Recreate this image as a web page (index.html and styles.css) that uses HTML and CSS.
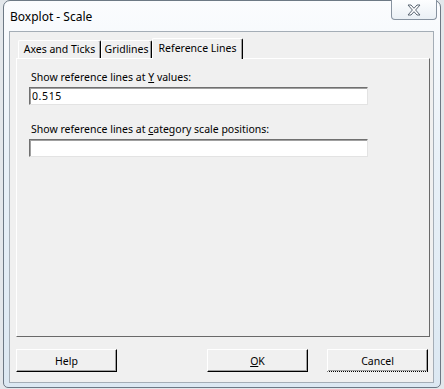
FILE: index.html
```html
<!DOCTYPE html>
<html lang="en">
<head>
    <meta charset="UTF-8">
    <title>Boxplot - Scale</title>
    <link rel="stylesheet" href="styles.css">
</head>
<body>
    <div class="window">
        <div class="titlebar">
            <span class="title">Boxplot - Scale</span>
            <button class="close">
                <svg width="14" height="12" viewBox="0 0 14 12">
                    <polygon points="1,1 4,1 7,4.3 10,1 13,1 8.6,6 13,11 10,11 7,7.7 4,11 1,11 5.4,6" fill="#fff" stroke="#5b6673" stroke-width="1" stroke-linejoin="round"/>
                </svg>
            </button>
        </div>

        <div class="client">
            <div class="tabs">
                <div class="tab tab-axes">Axes and Ticks</div>
                <div class="tab tab-grid">Gridlines</div>
                <div class="tab tab-ref active">Reference Lines</div>
            </div>

            <div class="panel">
                <label class="field-label">Show reference lines at <u>Y</u> values:</label>
                <input class="field" type="text" value="0.515">
                <label class="field-label second">Show reference lines at <u>c</u>ategory scale positions:</label>
                <input class="field" type="text" value="">
            </div>

            <div class="buttons">
                <button class="btn">Help</button>
                <div class="btn-group">
                    <button class="btn"><u>O</u>K</button>
                    <button class="btn focused">Cancel</button>
                </div>
            </div>
        </div>
    </div>
</body>
</html>
```

FILE: styles.css
```css
* {
    box-sizing: border-box;
}

body {
    margin: 0;
    width: 444px;
    height: 389px;
    overflow: hidden;
    background: #e3e7eb;
    font-family: "Noto Sans", "Open Sans", sans-serif;
    font-size: 10.5px;
    color: #000;
}

.window {
    margin-left: 3px;
    width: 438px;
    height: 388px;
    display: flex;
    flex-direction: column;
    border: 1px solid #6d7985;
    border-radius: 7px 7px 5px 5px;
    background: linear-gradient(#fbfcfe, #e9f1f8 40%, #dce8f2);
}

.titlebar {
    height: 30px;
    display: flex;
    justify-content: space-between;
    align-items: flex-start;
}

.title {
    padding: 7px 0 0 6px;
    font-size: 12px;
    color: #000;
}

.close {
    width: 46px;
    height: 20px;
    margin: -1px 3px 0 0;
    padding: 0;
    display: flex;
    align-items: center;
    justify-content: center;
    border: 1px solid #8793a0;
    border-top: none;
    border-radius: 0 0 4px 4px;
    background: linear-gradient(#fdfeff, #eaf0f5);
}

/* Client area */
.client {
    flex: 1;
    margin: 0 6px 4px 5px;
    display: flex;
    flex-direction: column;
    border: 1px solid #a4adb6;
    background: #f0f0f0;
}

.tabs {
    display: flex;
    height: 20px;
    margin: 6px 0 0 8px;
    align-items: flex-end;
}

.tab {
    height: 18px;
    line-height: 17px;
    text-align: center;
    background: #f0f0f0;
    border-top: 1px solid #fff;
    border-left: 1px solid #fff;
    border-right: 1px solid #000;
    border-radius: 2px 2px 0 0;
    box-shadow: inset -1px 0 #a0a0a0;
    white-space: nowrap;
}

.tab-axes { width: 83px; }
.tab-grid { width: 51px; }
.tab-ref { width: 91px; }

.tab.active {
    height: 21px;
    margin-bottom: -1px;
    line-height: 18px;
    position: relative;
    z-index: 1;
}

.panel {
    height: 279px;
    margin: 0 3px 0 6px;
    padding: 10px 0 0 12px;
    display: flex;
    flex-direction: column;
    align-items: flex-start;
    background: #f0f0f0;
    border-top: 1px solid #fff;
    border-left: 1px solid #fff;
    border-right: 1px solid #696969;
    border-bottom: 1px solid #696969;
}

.field-label {
    padding-left: 2px;
    line-height: 16px;
}

.field-label.second {
    margin-top: 16px;
}

.field {
    width: 339px;
    height: 18px;
    margin-top: 2px;
    padding: 0 2px;
    font-family: "Noto Sans", "Open Sans", sans-serif;
    font-size: 10.5px;
    letter-spacing: 0.6px;
    background: #fff;
    border-top: 1px solid #707070;
    border-left: 1px solid #707070;
    border-right: 1px solid #e3e3e3;
    border-bottom: 1px solid #e3e3e3;
    box-shadow: inset 1px 1px #a0a0a0;
    outline: none;
}

.buttons {
    display: flex;
    justify-content: space-between;
    margin: 12px 5px 0 6px;
}

.btn-group {
    display: flex;
    gap: 19px;
}

.btn {
    width: 101px;
    height: 23px;
    padding: 0;
    font-family: "Noto Sans", "Open Sans", sans-serif;
    font-size: 10.5px;
    color: #000;
    background: #f0f0f0;
    border-top: 1px solid #fff;
    border-left: 1px solid #fff;
    border-right: 1px solid #000;
    border-bottom: 1px solid #000;
    box-shadow: inset -1px -1px #a0a0a0;
}

.btn.focused {
    border-bottom: 1px dotted #000;
}
```
